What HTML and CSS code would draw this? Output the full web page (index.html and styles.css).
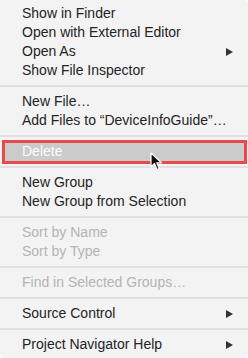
FILE: index.html
```html
<!DOCTYPE html>
<html lang="en">
<head>
    <meta charset="UTF-8">
    <meta name="viewport" content="width=device-width, initial-scale=1.0">
    <title>Context Menu</title>
    <link rel="stylesheet" href="styles.css">
</head>
<body>
    <div class="menu">
        <div class="item">Show in Finder</div>
        <div class="item">Open with External Editor</div>
        <div class="item has-sub">Open As <span class="arrow"></span></div>
        <div class="item">Show File Inspector</div>
        <div class="sep"></div>
        <div class="item">New File…</div>
        <div class="item">Add Files to “DeviceInfoGuide”…</div>
        <div class="sep"></div>
        <div class="item selected">Delete
            <svg class="cursor" width="13" height="20" viewBox="0 0 13 20">
                <path d="M1 1 L1 15 L4.5 11.5 L7 17.5 L9.2 16.6 L6.8 10.8 L11.5 10.8 Z" fill="#111" stroke="#fff" stroke-width="1.2" stroke-linejoin="round"/>
            </svg>
        </div>
        <div class="sep"></div>
        <div class="item">New Group</div>
        <div class="item">New Group from Selection</div>
        <div class="sep"></div>
        <div class="item disabled">Sort by Name</div>
        <div class="item disabled">Sort by Type</div>
        <div class="sep"></div>
        <div class="item disabled">Find in Selected Groups…</div>
        <div class="sep"></div>
        <div class="item has-sub">Source Control <span class="arrow"></span></div>
        <div class="sep"></div>
        <div class="item has-sub">Project Navigator Help <span class="arrow"></span></div>
    </div>
</body>
</html>
```

FILE: styles.css
```css
body {
    margin: 0;
    padding: 0;
    background-color: #fff;
    font-family: "Liberation Sans", Arial, sans-serif;
}

.menu {
    width: 248px;
    height: 358px;
    box-sizing: border-box;
    padding: 4px 0;
    background-color: #f3f3f3;
    border-radius: 0 5px 5px 5px;
    position: relative;
}

.item {
    height: 19px;
    line-height: 19px;
    padding-left: 22px;
    font-size: 14px;
    color: #242424;
    display: flex;
    align-items: center;
    position: relative;
}

.item.disabled {
    color: #b4b4b4;
}

.item.selected {
    color: #fbfbfb;
    background-color: #cbcbcb;
    margin: 0 4px;
    padding-left: 18px;
}

/* red annotation box drawn round the selected row */
.item.selected::after {
    content: "";
    position: absolute;
    left: -2px;
    right: -3px;
    top: -2px;
    bottom: -3px;
    border: 3px solid #e84a4a;
}

.cursor {
    position: absolute;
    left: 146px;
    top: 10px;
    z-index: 2;
}

.arrow {
    position: absolute;
    right: 15px;
    top: 6px;
    width: 0;
    height: 0;
    border-top: 4px solid transparent;
    border-bottom: 4px solid transparent;
    border-left: 7px solid #333;
}

.sep {
    height: 12px;
    position: relative;
}

.sep::before {
    content: "";
    position: absolute;
    left: 0;
    right: 0;
    top: 5px;
    height: 2px;
    background-color: #e1e1e1;
}
```
